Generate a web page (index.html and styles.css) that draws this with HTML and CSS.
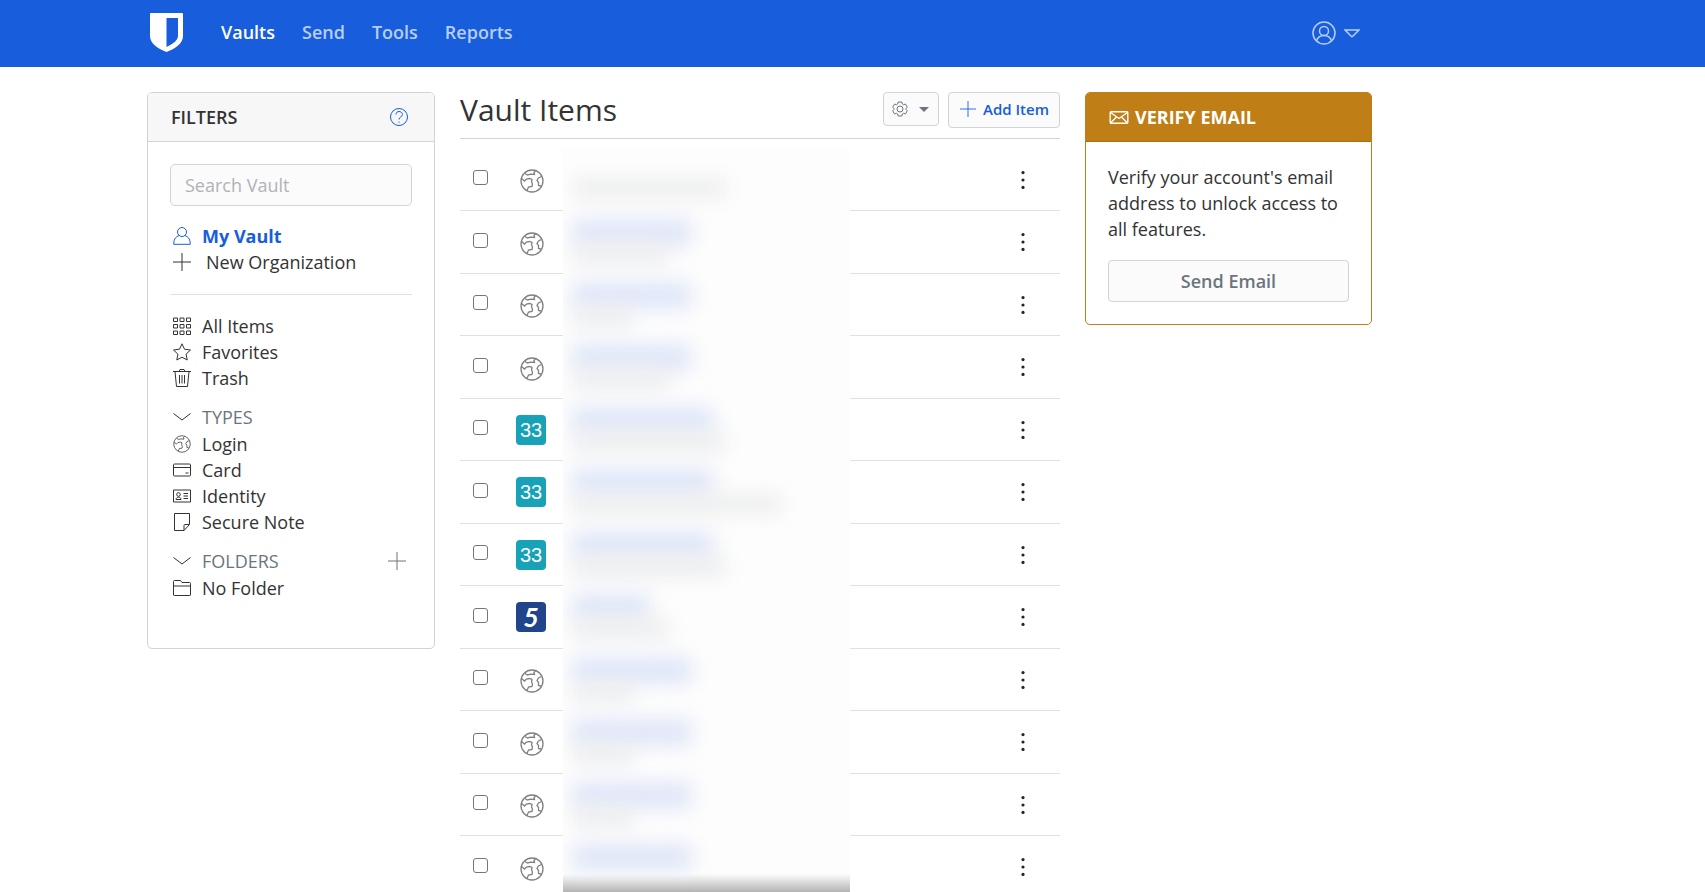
FILE: index.html
```html
<!DOCTYPE html>
<html lang="en">
<head>
<meta charset="utf-8">
<title>Vault Items</title>
<link rel="stylesheet" href="styles.css">
</head>
<body>
<svg class="defs" aria-hidden="true">
  <symbol id="globe" viewBox="0 0 24 24"><circle cx="12" cy="12" r="11"/><path d="M5 4.500 7.500 6l3-.8 4 .3-.5-2 1.500-1.500M1.500 9.500 4.500 12l2-2 3-.5 2.500 1-.5 2.500 1 2-.5 2.500-3.500.5-1.500 3.500M21.500 7.500l-3 1.500-1.500 2.500 1.500 2v3l2.500.5"/></symbol>
  <symbol id="plus" viewBox="0 0 18 18"><path d="M9 0v18M0 9h18"/></symbol>
  <symbol id="chevron" viewBox="0 0 18 18"><path d="M.5 5.500 9 12l8.500-6.500"/></symbol>
  <symbol id="dots" viewBox="0 0 4 18"><circle cx="2" cy="1.600" r="1.600"/><circle cx="2" cy="9" r="1.600"/><circle cx="2" cy="16.400" r="1.600"/></symbol>
</svg>
<header class="navbar">
  <div class="navbar-inner">
    <a class="brand" href="#" aria-label="Home"><svg class="logo" viewBox="0 0 33 39"><path fill="#fff" d="M1 0h31q1 0 1 1v22c0 7-7 12.500-16.500 16C7 35.500 0 30 0 23V1q0-1 1-1z"/><path fill="#175ddc" d="M16.500 5H28v18c0 4-5 8-11.500 11z"/></svg></a>
    <nav class="links">
      <a class="active" href="#">Vaults</a><a href="#">Send</a><a href="#">Tools</a><a href="#">Reports</a>
    </nav>
    <button class="account" aria-label="Account">
      <svg class="avatar" viewBox="0 0 24 24"><circle cx="12" cy="12" r="11"/><circle cx="12" cy="10" r="4.500"/><path d="M4.500 20c1-3.500 4-5.500 7.500-5.500s6.500 2 7.500 5.500"/></svg>
      <svg class="caret" viewBox="0 0 16 9"><path d="M1 1h14L8.500 7.500h-1z"/></svg>
    </button>
  </div>
</header>
<main class="page">
  <aside class="card filters">
    <div class="card-header"><h2>FILTERS</h2><a class="help" href="#" aria-label="Help"><svg viewBox="0 0 18 18"><circle cx="9" cy="9" r="8.500"/><path d="M6 6.500C6 4.500 7.500 3.500 9 3.500s3.500 1 3.500 3S9 9 9 11.500M9 13.500v1.200"/></svg></a></div>
    <div class="card-body">
      <input class="search" type="text" placeholder="Search Vault" aria-label="Search Vault">
      <ul class="list">
        <li><a class="current" href="#"><svg viewBox="0 0 18 18"><circle cx="9" cy="5" r="4.500"/><path d="M6 8.500C3 9.500.8 12 .8 16v1.300h16.400V16c0-4-2.200-6.500-5.200-7.500"/></svg>My Vault</a></li>
        <li><a class="new-org" href="#"><svg><use href="#plus"/></svg>New Organization</a></li>
      </ul>
      <hr>
      <ul class="list">
        <li><a href="#"><svg viewBox="0 0 18 18"><path d="M.5 1h4v3.500h-4zM7 1h4v3.500H7zM13.500 1h4v3.500h-4zM.5 7.500h4V11h-4zM7 7.500h4V11H7zM13.500 7.500h4V11h-4zM.5 14h4v3.500h-4zM7 14h4v3.500H7zM13.500 14h4v3.500h-4z"/></svg>All Items</a></li>
        <li><a href="#"><svg viewBox="0 0 18 18"><path d="m9 .8 2.500 5.400 6 .8-4.400 4.100 1.100 5.900L9 14.200 3.800 17l1.100-5.900L.5 7l6-.8z"/></svg>Favorites</a></li>
        <li><a href="#"><svg viewBox="0 0 18 18"><path d="M0 2.500h18M6 2.500l1-2h4l1 2M2 2.500l1.500 15h11l1.500-15M6.500 6v8.500M9 6v8.500M11.500 6v8.500"/></svg>Trash</a></li>
      </ul>
      <h3><svg><use href="#chevron"/></svg>TYPES</h3>
      <ul class="list">
        <li><a href="#"><svg><use href="#globe"/></svg>Login</a></li>
        <li><a href="#"><svg viewBox="0 0 18 18"><path d="M1.500 3h15q1 0 1 1v10q0 1-1 1h-15q-1 0-1-1V4q0-1 1-1zM.5 6.500h17M12.500 12h3"/></svg>Card</a></li>
        <li><a href="#"><svg viewBox="0 0 18 18"><path d="M.5 3h17v12H.5zM3 12.500c0-3 5-3 5 0zM10.500 6.500H15M10.500 9H15M10.500 11.500H15"/><circle cx="5.500" cy="7.500" r="1.800"/></svg>Identity</a></li>
        <li><a href="#"><svg viewBox="0 0 18 18"><path d="M1.500.5h15v11L11 17.500H1.500zM11 17.500v-5q0-1 1-1h4.500"/></svg>Secure Note</a></li>
      </ul>
      <h3><svg><use href="#chevron"/></svg>FOLDERS<button class="add-folder" aria-label="Add folder"><svg><use href="#plus"/></svg></button></h3>
      <ul class="list">
        <li><a href="#"><svg viewBox="0 0 18 18"><path d="M.5 16V2.500q0-1 1-1h6l1.500 2h7.500q1 0 1 1V16q0 .5-1 .5h-15q-1 0-1-.5zM.5 7h17"/></svg>No Folder</a></li>
      </ul>
    </div>
  </aside>
  <section class="vault">
    <div class="vault-header">
      <h1>Vault Items</h1>
      <button class="btn options" aria-label="Options"><svg class="gear" viewBox="0 0 16 16"><path d="M6.200 1h3.600l.5 2 1.200.7 2-.6 1.800 3L14 7.500v1l1.300 1.400-1.800 3-2-.6-1.200.7-.5 2H6.200l-.5-2-1.200-.7-2 .6-1.800-3L2 8.500v-1L.7 6.100l1.800-3 2 .6L5.700 3z"/><circle cx="8" cy="8" r="3"/></svg><span class="triangle"></span></button>
      <button class="btn add"><svg><use href="#plus"/></svg>Add Item</button>
    </div>
    <table class="items">
      <colgroup><col class="c-check"><col class="c-icon"><col class="c-name"><col><col class="c-menu"></colgroup>
      <tbody>
        <tr><td><input type="checkbox" aria-label="Select item"></td><td><svg class="globe"><use href="#globe"/></svg></td><td class="name"><span class="smudge blank"></span><span class="smudge wide"></span></td><td></td><td><button class="more" aria-label="More"><svg><use href="#dots"/></svg></button></td></tr>
        <tr><td><input type="checkbox" aria-label="Select item"></td><td><svg class="globe"><use href="#globe"/></svg></td><td class="name"><span class="smudge title"></span><span class="smudge sub"></span></td><td></td><td><button class="more" aria-label="More"><svg><use href="#dots"/></svg></button></td></tr>
        <tr><td><input type="checkbox" aria-label="Select item"></td><td><svg class="globe"><use href="#globe"/></svg></td><td class="name"><span class="smudge title"></span><span class="smudge short"></span></td><td></td><td><button class="more" aria-label="More"><svg><use href="#dots"/></svg></button></td></tr>
        <tr><td><input type="checkbox" aria-label="Select item"></td><td><svg class="globe"><use href="#globe"/></svg></td><td class="name"><span class="smudge title"></span><span class="smudge sub"></span></td><td></td><td><button class="more" aria-label="More"><svg><use href="#dots"/></svg></button></td></tr>
        <tr><td><input type="checkbox" aria-label="Select item"></td><td><span class="site teal">33</span></td><td class="name"><span class="smudge title long"></span><span class="smudge wide"></span></td><td></td><td><button class="more" aria-label="More"><svg><use href="#dots"/></svg></button></td></tr>
        <tr><td><input type="checkbox" aria-label="Select item"></td><td><span class="site teal">33</span></td><td class="name"><span class="smudge title long"></span><span class="smudge widest"></span></td><td></td><td><button class="more" aria-label="More"><svg><use href="#dots"/></svg></button></td></tr>
        <tr><td><input type="checkbox" aria-label="Select item"></td><td><span class="site teal">33</span></td><td class="name"><span class="smudge title long"></span><span class="smudge wide"></span></td><td></td><td><button class="more" aria-label="More"><svg><use href="#dots"/></svg></button></td></tr>
        <tr><td><input type="checkbox" aria-label="Select item"></td><td><span class="site navy">5</span></td><td class="name"><span class="smudge title brief"></span><span class="smudge sub"></span></td><td></td><td><button class="more" aria-label="More"><svg><use href="#dots"/></svg></button></td></tr>
        <tr><td><input type="checkbox" aria-label="Select item"></td><td><svg class="globe"><use href="#globe"/></svg></td><td class="name"><span class="smudge title"></span><span class="smudge short"></span></td><td></td><td><button class="more" aria-label="More"><svg><use href="#dots"/></svg></button></td></tr>
        <tr><td><input type="checkbox" aria-label="Select item"></td><td><svg class="globe"><use href="#globe"/></svg></td><td class="name"><span class="smudge title"></span><span class="smudge short"></span></td><td></td><td><button class="more" aria-label="More"><svg><use href="#dots"/></svg></button></td></tr>
        <tr><td><input type="checkbox" aria-label="Select item"></td><td><svg class="globe"><use href="#globe"/></svg></td><td class="name"><span class="smudge title"></span><span class="smudge short"></span></td><td></td><td><button class="more" aria-label="More"><svg><use href="#dots"/></svg></button></td></tr>
        <tr class="last"><td><input type="checkbox" aria-label="Select item"></td><td><svg class="globe"><use href="#globe"/></svg></td><td class="name"><span class="smudge title"></span></td><td></td><td><button class="more" aria-label="More"><svg><use href="#dots"/></svg></button></td></tr>
      </tbody>
    </table>
  </section>
  <aside class="card verify">
    <div class="card-header"><svg class="mail" viewBox="0 0 19 13"><rect x=".7" y=".7" width="17.600" height="11.600" rx="1"/><path d="m1 1.500 8.500 6 8.500-6M1 12l6-6M18 12l-6-6"/></svg><h2>VERIFY EMAIL</h2></div>
    <div class="card-body">
      <p>Verify your account's email address to unlock access to all features.</p>
      <button class="btn send">Send Email</button>
    </div>
  </aside>
</main>
</body>
</html>
```
FILE: styles.css
```css
* { box-sizing: border-box; }
body { margin: 0; background: #fff; color: #333; font: 400 18px/26px "Open Sans", "Noto Sans", sans-serif; }
a { color: inherit; text-decoration: none; }
button { font: inherit; color: inherit; cursor: pointer; border: 0; background: none; padding: 0; }
svg { display: block; width: 18px; height: 18px; flex: none; fill: none; stroke: currentColor; stroke-width: 1; }
h1, h2, h3, p, ul { margin: 0; padding: 0; }
ul { list-style: none; }
.defs { position: absolute; width: 0; height: 0; }

.navbar { background: #175ddc; height: 67px; padding-left: 150px; color: #fff; }
.navbar-inner { display: flex; align-items: center; height: 64px; max-width: 1210px; }
.logo { width: 33px; height: 39px; stroke: none; }
.brand { margin-right: 38px; }
.links { display: flex; gap: 27px; font-weight: 600; }
.links a { color: #b9cef5; }
.links a.active { color: #fff; }
.account { margin-left: auto; padding-top: 2px; display: flex; align-items: center; gap: 8px; color: #b9cef5; }
.avatar { width: 24px; height: 24px; stroke-width: 1.500; }
.caret { width: 16px; height: 9px; stroke-width: 1.500; }

.page { display: grid; grid-template-columns: 288fr 600fr 287fr; gap: 25px; align-items: start; max-width: 1372px; padding-left: 147px; }
.card { margin-top: 25px; border: 1px solid #ced4da; border-radius: 5px; overflow: hidden; }
.card-header { display: flex; align-items: center; height: 49px; padding: 0 26px 0 23px; background: #f7f7f7; border-bottom: 1px solid #ced4da; }
.card-header h2 { font-size: 18px; line-height: 26px; font-weight: 600; }
.help { margin-left: auto; color: #175ddc; }
.card-body { padding: 22px; }
.filters .card-body { padding-bottom: 47px; }
.search { display: block; width: 100%; height: 42px; padding: 0 14px; border: 1px solid #ced4da; border-radius: 5px; background: #fbfbfb; font: inherit; color: inherit; margin-bottom: 17px; }
.search::placeholder { color: #b0b3b6; opacity: 1; }
.list a { display: flex; align-items: center; gap: 11px; padding-left: 3px; height: 26px; }
.list a.new-org { gap: 15px; }
.list a.current { color: #175ddc; font-weight: 700; }
hr { border: 0; border-top: 1px solid #dee2e6; margin: 19px 0 18px; }
h3 { display: flex; align-items: center; gap: 11px; height: 26px; padding: 0 6px 0 3px; margin: 13px 0 1px; font-size: 18px; font-weight: 400; color: #6c757d; }
h3 > svg { color: #333; }
.add-folder { margin-left: auto; }

.vault-header { display: flex; align-items: flex-start; height: 72px; padding-top: 25px; border-bottom: 1px solid #ced4da; margin-bottom: 10px; }
h1 { font-size: 30px; line-height: 36px; font-weight: 400; margin-right: auto; }
.btn { display: flex; align-items: center; border: 1px solid #ced4da; border-radius: 4px; background: #fbfbfb; color: #6c757d; }
.options { width: 56px; height: 34px; padding: 0 9px 0 8px; justify-content: space-between; margin-right: 9px; }
.gear { width: 16px; height: 16px; }
.triangle { border: 5px solid transparent; border-top-color: #6c757d; border-bottom: 0; }
.add { height: 36px; padding: 0 10px 2px 11px; gap: 7px; font-size: 15px; font-weight: 600; color: #175ddc; }
.add svg { width: 16px; height: 16px; }

.items { width: 100%; border-collapse: separate; border-spacing: 0; table-layout: fixed; }
.c-check { width: 56px; }
.c-icon { width: 47px; }
.c-name { width: 287px; background: #fdfdfd; }
.c-menu { width: 50px; }
.items td { height: 62px; padding: 0; border-bottom: 1px solid #dee2e6; vertical-align: top; }
.items tr:nth-child(even) td { height: 63px; }
.items tr.last td { height: 56px; border-bottom: 0; }
.items input { appearance: none; display: block; width: 15px; height: 15px; margin: 21px 0 0 13px; border: 1px solid #767676; border-radius: 3px; background: #fff; }
.items tr:nth-child(even) input { margin-top: 22px; }
.items .globe { width: 24px; height: 24px; margin: 20px 0 0 4px; color: #808080; stroke-width: 1.300; }
.items tr:nth-child(even) .globe { margin-top: 21px; }
.site { display: block; width: 30px; height: 30px; margin-top: 16px; border-radius: 4px; color: #fff; text-align: center; }
.teal { background: #17a2b8; font: 20px/31px "Liberation Sans", sans-serif; }
.navy { background: #20458b; font: italic bold 27px/30px Lato, sans-serif; }
.more { display: block; margin: 22px 0 0 11px; }
.more svg { width: 4px; height: 18px; fill: #212529; stroke: none; }
.items td.name { border-bottom: 0; clip-path: inset(-20px 0); }
.smudge { display: block; width: 96px; height: 18px; margin-left: 10px; background: #ebeced; filter: blur(10px); }
.smudge.title { width: 118px; height: 25px; margin-top: 9px; background: #dde4f8; }
.smudge.blank { height: 30px; background: none; }
.smudge.long { width: 140px; }
.smudge.brief { width: 76px; }
.smudge.short { width: 60px; }
.smudge.wide { width: 152px; }
.smudge.widest { width: 208px; }
.items tr.last .name { background: linear-gradient(#fdfdfd00 38px, #b4b4b4); }

.verify { border-color: #bf7e16; }
.verify .card-header { background: #bf7e16; border-color: #a86d10; color: #fff; gap: 6px; }
.verify h2 { font-weight: 700; }
.mail { width: 20px; height: 13px; stroke-width: 1.400; }
.verify p { margin: 0 0 18px; }
.send { width: 100%; height: 42px; justify-content: center; font-weight: 600; }
```
